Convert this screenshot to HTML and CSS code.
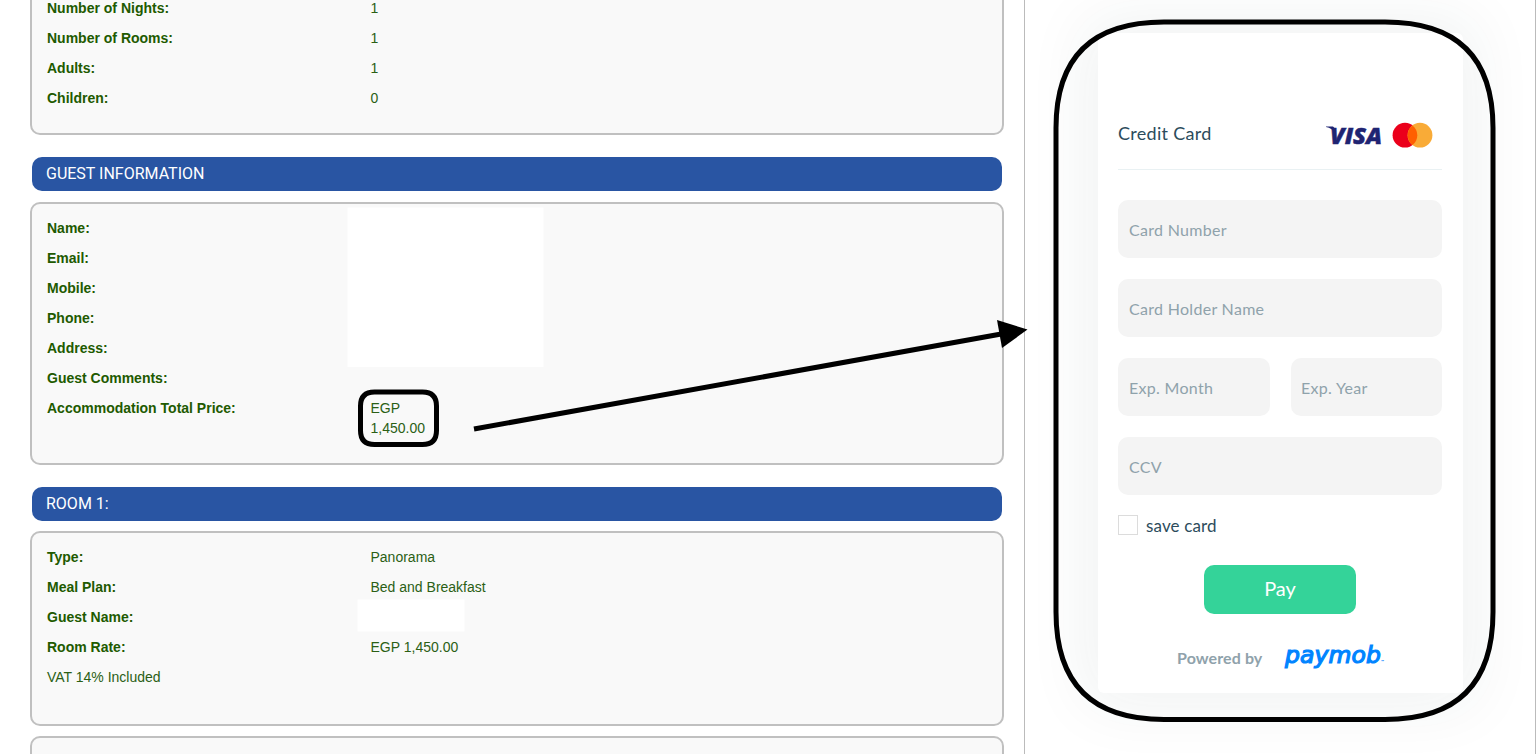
FILE: index.html
```html
<!DOCTYPE html>
<html lang="en">
<head>
  <meta charset="UTF-8" />
  <title>Booking Details</title>
  <link rel="stylesheet" href="styles.css">
</head>
<body>
  <div class="page">
    <div class="booking">
      <div class="box box-first">
        <div class="row"><b>Number of Nights:</b><span>1</span></div>
        <div class="row"><b>Number of Rooms:</b><span>1</span></div>
        <div class="row"><b>Adults:</b><span>1</span></div>
        <div class="row"><b>Children:</b><span>0</span></div>
      </div>

      <h2 class="bar">GUEST INFORMATION</h2>
      <div class="box">
        <div class="row"><b>Name:</b></div>
        <div class="row"><b>Email:</b></div>
        <div class="row"><b>Mobile:</b></div>
        <div class="row"><b>Phone:</b></div>
        <div class="row"><b>Address:</b></div>
        <div class="row"><b>Guest Comments:</b></div>
        <div class="row"><b>Accommodation Total Price:</b><span>EGP<br>1,450.00</span></div>
      </div>

      <h2 class="bar">ROOM 1:</h2>
      <div class="box box-room">
        <div class="row"><b>Type:</b><span>Panorama</span></div>
        <div class="row"><b>Meal Plan:</b><span>Bed and Breakfast</span></div>
        <div class="row"><b>Guest Name:</b></div>
        <div class="row"><b>Room Rate:</b><span>EGP 1,450.00</span></div>
        <div class="row"><span>VAT 14% Included</span></div>
      </div>
      <div class="box box-last"></div>
    </div>

    <div class="payment">
      <form class="pay-card">
        <div class="pay-head">
          <span class="pay-title">Credit Card</span>
          <svg class="brands" width="108" height="36" viewBox="0 -6 108 36">
            <path d="M1 5.500 H8 L11 8.500 L11 13 C8.500 9 5 6.700 1 6.100 Z" fill="#1f2472" />
            <text class="visa" x="5" y="22.500" textLength="52" lengthAdjust="spacingAndGlyphs">VISA</text>
            <circle cx="80" cy="14.200" r="12.400" fill="#eb001b" />
            <circle cx="95" cy="14.200" r="12.400" fill="#f9ab37" />
            <path d="M87.500 4.400 A12.400 12.400 0 0 1 87.500 24 A12.400 12.400 0 0 1 87.500 4.400 Z" fill="#ff5f00" />
          </svg>
        </div>
        <div class="field number">Card Number</div>
        <div class="field holder">Card Holder Name</div>
        <div class="field-group">
          <div class="field month">Exp. Month</div>
          <div class="field year">Exp. Year</div>
        </div>
        <div class="field ccv">CCV</div>
        <div class="save"><span class="check"></span><span class="save-label">save card</span></div>
        <button type="button" class="btn">Pay</button>
        <div class="powered">
          <span>Powered by</span>
          <svg width="110" height="40" viewBox="0 -5 110 40">
            <text class="paymob" x="3" y="20.500" textLength="96" lengthAdjust="spacingAndGlyphs">paymob</text>
            <text class="tm" x="99" y="20.500">™</text>
          </svg>
        </div>
      </form>
    </div>
  </div>

  <!-- hidden guest data, highlights and arrow over the page -->
  <svg class="notes" width="1536" height="754" viewBox="0 0 1536 754">
    <rect x="347.500" y="207.500" width="196" height="159.500" fill="#fff" />
    <rect x="357.500" y="599.500" width="107" height="32" fill="#fff" />
    <path class="mark" d="M360.500 406 Q360.500 392 374.500 392 H422.500 Q436.500 392 436.500 406 V430.500 Q436.500 444.500 422.500 444.500 H374.500 Q360.500 444.500 360.500 430.500 Z" />
    <path class="mark" d="M1056 128 Q1056 22 1164 22 H1385 Q1493 22 1493 128 V612 Q1493 719.500 1385 719.500 H1164 Q1056 719.500 1056 612 Z" />
    <path class="mark" d="M474 429 L1004 333.500" />
    <path d="M997 320 L1027.500 329.500 L1002 348 Z" />
  </svg>
</body>
</html>
```

FILE: styles.css
```css
* {
  box-sizing: border-box;
}

body {
  margin: 0;
  height: 754px;
  overflow: hidden;
  background-color: #fff;
  font-family: "Liberation Sans", Arial, sans-serif;
}

.page {
  position: relative;
  display: flex;
  height: 754px;
  overflow: hidden;
}

.booking {
  width: 1024px;
  padding: 0 20px 0 30px;
  font-size: 14px;
  line-height: 20px;
  color: #2b5f15;
}

.box {
  background-color: #f9f9f9;
  border: 2px solid #c0c0c0;
  border-radius: 10px;
  padding: 9px 15px 20px;
}

.box-first {
  margin-top: -9px;
  padding-top: 0;
}

.box-room {
  padding-bottom: 32px;
}

.box-last {
  height: 60px;
  margin-top: 10px;
}

.row {
  display: grid;
  grid-template-columns: 323.5px 1fr;
  padding: 5px 0;
}

.row b {
  color: #215a00;
}

.bar {
  margin: 22px 2px 11px;
  height: 34px;
  padding-left: 14px;
  border-radius: 10px;
  background-color: #2955a3;
  color: #fff;
  font: 400 16px/33px Roboto, sans-serif;
}

.bar + .box-room {
  margin-top: -1px;
}

.payment {
  width: 512px;
  border-left: 1px solid #bbb;
  border-right: 1px solid #bbb;
  padding: 33px 0 0 73px;
  overflow: hidden;
}

.pay-card {
  width: 365px;
  height: 660px;
  padding: 75px 21px 0 20px;
  border-radius: 6px;
  background-color: #fff;
  box-shadow: 0 0 64px 12px rgba(30, 60, 65, 0.065);
  font-family: Lato, sans-serif;
  color: #2c4c5c;
}

.pay-head {
  display: flex;
  justify-content: space-between;
  align-items: center;
  height: 62px;
  padding: 0 9px 12px 0;
  border-bottom: 1px solid #e9f1f3;
}

.pay-title {
  font-size: 18px;
  letter-spacing: 0.3px;
}

.visa {
  font: italic 800 23.5px "Open Sans", sans-serif;
  fill: #1f2472;
  stroke: #1f2472;
  stroke-width: 0.5;
}

.field {
  display: flex;
  align-items: center;
  height: 58px;
  margin-top: 21px;
  padding: 0 10px 0 11px;
  border-radius: 10px;
  background-color: #f4f4f4;
  color: #8fa2ab;
  font-size: 16px;
  letter-spacing: 0.3px;
}

.number {
  margin-top: 30px;
}

.year {
  padding-left: 10px;
}

.field-group {
  display: grid;
  grid-template-columns: 152px 151px;
  column-gap: 21px;
}

.save {
  display: flex;
  align-items: center;
  gap: 8px;
  height: 20px;
  margin-top: 20px;
  font-size: 17px;
}

.save-label {
  letter-spacing: 0.15px;
}

.check {
  width: 20px;
  height: 20px;
  border: 1px solid #dcdcdc;
}

.btn {
  display: block;
  width: 152px;
  height: 49px;
  margin: 30px auto 0;
  padding: 0 0 4px;
  border: none;
  border-radius: 10px;
  background-color: #34d399;
  color: #fff;
  font-family: Lato, sans-serif;
  font-size: 20px;
}

.powered {
  display: flex;
  align-items: center;
  gap: 20px;
  height: 30px;
  margin: 28px 0 0 59px;
  color: #8fa2ab;
  font-size: 16px;
  font-weight: bold;
  letter-spacing: 0.1px;
}

.paymob {
  font: italic 400 22.5px "DejaVu Sans", sans-serif;
  fill: #0084ff;
  stroke: #0084ff;
  stroke-width: 1.2;
}

.tm {
  font-size: 4px;
  fill: #0084ff;
}

.notes {
  position: absolute;
  left: 0;
  top: 0;
}

.mark {
  fill: none;
  stroke: #000;
  stroke-width: 5;
}
```
